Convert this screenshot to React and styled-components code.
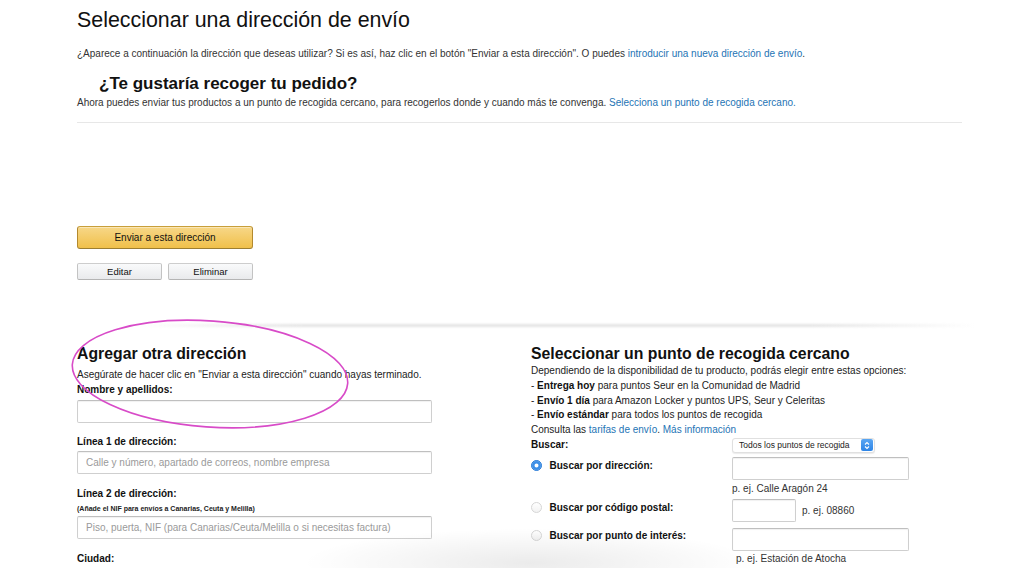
import React from 'react';
import styled, { createGlobalStyle } from 'styled-components';

const Global = createGlobalStyle`
  html, body { margin: 0; padding: 0; background: #fff; }
  body {
    font-family: "Liberation Sans", Arial, Helvetica, sans-serif;
    color: #222;
    -webkit-font-smoothing: antialiased;
  }
  * { box-sizing: border-box; }
`;

const Page = styled.div`
  position: relative;
  width: 1024px;
  height: 568px;
  overflow: hidden;
  padding: 8px 0 0 77px;
`;

const Title = styled.h1`
  margin: 0;
  font-size: 21.4px;
  line-height: 25px;
  font-weight: 400;
  color: #111;
`;

const Text = styled.p`
  margin: ${p => p.$mt || 0}px 0 0;
  font-size: 10px;
  line-height: 14px;
  color: #333;
`;

const Link = styled.a`
  color: #2474b5;
  text-decoration: none;
`;

const PickupTitle = styled.h2`
  margin: 13px 0 0 22px;
  font-size: 17px;
  line-height: 20px;
  font-weight: 700;
  color: #111;
`;

const Divider = styled.hr`
  margin: 12px 0 0;
  width: 885px;
  border: 0;
  border-top: 1px solid #e7e7e7;
`;

const PrimaryButton = styled.button`
  display: block;
  margin-top: 103px;
  width: 176px;
  height: 23px;
  border: 1px solid;
  border-color: #c89f3a #b3892e #9c7e31;
  border-radius: 3px;
  background: linear-gradient(to bottom, #f7d788, #f0c04a);
  box-shadow: 0 1px 0 rgba(255,255,255,.4) inset;
  font-family: inherit;
  font-size: 10px;
  color: #111;
  padding: 0;
`;

const ButtonRow = styled.div`
  display: flex;
  gap: 6px;
  margin-top: 14px;
`;

const SecondaryButton = styled.button`
  width: 85px;
  height: 17px;
  border: 1px solid;
  border-color: #cdcdcd #c3c3c3 #b4b4b4;
  border-radius: 2px;
  background: linear-gradient(to bottom, #f9fafb, #e9eaec);
  font-family: inherit;
  font-size: 9.5px;
  color: #111;
  padding: 0;
`;

const Shade = styled.div`
  margin: 44px 0 0 60px;
  width: 840px;
  height: 3px;
  background: linear-gradient(to right, rgba(230,230,230,0), rgba(225,225,225,.9) 20%, rgba(225,225,225,.9) 80%, rgba(230,230,230,0));
  filter: blur(1px);
`;

const Columns = styled.div`
  display: grid;
  grid-template-columns: 454px 1fr;
  margin-top: 18px;
`;

const Column = styled.div`
  display: flex;
  flex-direction: column;
`;

const SectionTitle = styled.h3`
  margin: 0;
  font-size: 15.8px;
  line-height: 18px;
  font-weight: 700;
  color: #111;
`;

const Note = styled.p`
  margin: ${p => p.$mt || 0}px 0 0;
  font-size: 10px;
  line-height: 13px;
  color: #222;
`;

const Label = styled.label`
  display: block;
  margin-top: ${p => p.$mt || 0}px;
  font-size: 10px;
  line-height: 13px;
  font-weight: 700;
  color: #111;
`;

const Small = styled.div`
  margin-top: 4px;
  font-size: 7px;
  line-height: 9px;
  font-weight: 700;
  color: #222;
`;

const Input = styled.input`
  display: block;
  width: ${p => p.$w || 355}px;
  height: 23px;
  margin-top: ${p => p.$mt || 0}px;
  border: 1px solid #cfcfcf;
  border-top-color: #bfbfbf;
  border-radius: 2px;
  box-shadow: 0 1px 1px rgba(0,0,0,.06) inset;
  padding: 0 8px;
  font-family: inherit;
  font-size: 10px;
  color: #111;
  background: #fff;
  &::placeholder { color: #9a9a9a; }
`;

const List = styled.div`
  margin-top: 1px;
  font-size: 10px;
  line-height: 14.75px;
  color: #222;
  b { color: #111; }
`;

const SearchGrid = styled.div`
  display: grid;
  grid-template-columns: 201px auto;
  align-items: start;
`;

const SearchLabel = styled.div`
  display: flex;
  align-items: center;
  gap: 8px;
  padding-top: ${p => p.$pt || 0}px;
  font-size: 10px;
  line-height: 13px;
  font-weight: 700;
  color: #111;
`;

const Radio = styled.span`
  width: 11px;
  height: 11px;
  border-radius: 50%;
  flex: none;
  margin-left: -0.5px;
  ${p => p.$checked
    ? `background: #3b8fe8; border: 1px solid #2f7fd8; box-shadow: inset 0 0 0 2.5px #3b8fe8, inset 0 0 0 5px #fff;`
    : `background: linear-gradient(#fff, #f2f2f2); border: 1px solid #d6d6d6;`}
`;

const Control = styled.div`
  display: flex;
  flex-direction: ${p => (p.$row ? 'row' : 'column')};
  align-items: ${p => (p.$row ? 'center' : 'flex-start')};
  gap: ${p => (p.$row ? 6 : 0)}px;
  margin-top: ${p => p.$mt || 0}px;
`;

const Hint = styled.div`
  font-size: 10px;
  line-height: 13px;
  color: #333;
  padding-left: ${p => p.$pl || 0}px;
  margin-top: ${p => p.$mt || 0}px;
`;

const Select = styled.div`
  display: flex;
  align-items: center;
  justify-content: space-between;
  width: 143px;
  height: 15px;
  padding: 0 1px 0 6px;
  border: 1px solid #e0e0e0;
  border-radius: 3px;
  background: #fff;
  box-shadow: 0 1px 1px rgba(0,0,0,.08);
  font-size: 8.5px;
  color: #222;
`;

const Stepper = styled.span`
  width: 12px;
  height: 12px;
  border-radius: 2px;
  background: linear-gradient(#5aa6f3, #2d84e6);
  display: flex;
  align-items: center;
  justify-content: center;
`;

const Annotation = styled.svg`
  position: absolute;
  left: 0;
  top: 0;
  pointer-events: none;
`;

const BottomShade = styled.div`
  position: absolute;
  left: 300px;
  bottom: -30px;
  width: 460px;
  height: 70px;
  pointer-events: none;
  background: radial-gradient(ellipse at center, rgba(0,0,0,.08), rgba(0,0,0,0) 70%);
`;

export default function App() {
  return (
    <>
      <Global />
      <Page>
        <Title>Seleccionar una dirección de envío</Title>
        <Text $mt={14}>
          ¿Aparece a continuación la dirección que deseas utilizar? Si es así, haz clic en el botón "Enviar a esta dirección". O puedes{' '}
          <Link href="#">introducir una nueva dirección de envío</Link>.
        </Text>
        <PickupTitle>¿Te gustaría recoger tu pedido?</PickupTitle>
        <Text $mt={2}>
          Ahora puedes enviar tus productos a un punto de recogida cercano, para recogerlos donde y cuando más te convenga.{' '}
          <Link href="#">Selecciona un punto de recogida cercano.</Link>
        </Text>
        <Divider />
        <PrimaryButton>Enviar a esta dirección</PrimaryButton>
        <ButtonRow>
          <SecondaryButton>Editar</SecondaryButton>
          <SecondaryButton>Eliminar</SecondaryButton>
        </ButtonRow>
        <Shade />
        <Columns>
          <Column>
            <SectionTitle>Agregar otra dirección</SectionTitle>
            <Note $mt={5}>Asegúrate de hacer clic en "Enviar a esta dirección" cuando hayas terminado.</Note>
            <Label $mt={2}>Nombre y apellidos:</Label>
            <Input $mt={4} />
            <Label $mt={12}>Línea 1 de dirección:</Label>
            <Input $mt={3} placeholder="Calle y número, apartado de correos, nombre empresa" />
            <Label $mt={13}>Línea 2 de dirección:</Label>
            <Small>(Añade el NIF para envíos a Canarias, Ceuta y Melilla)</Small>
            <Input $mt={3} placeholder="Piso, puerta, NIF (para Canarias/Ceuta/Melilla o si necesitas factura)" />
            <Label $mt={13}>Ciudad:</Label>
            <Input $mt={3} />
          </Column>
          <Column>
            <SectionTitle>Seleccionar un punto de recogida cercano</SectionTitle>
            <List>
              <div>Dependiendo de la disponibilidad de tu producto, podrás elegir entre estas opciones:</div>
              <div>- <b>Entrega hoy</b> para puntos Seur en la Comunidad de Madrid</div>
              <div>- <b>Envío 1 día</b> para Amazon Locker y puntos UPS, Seur y Celeritas</div>
              <div>- <b>Envío estándar</b> para todos los puntos de recogida</div>
              <div>Consulta las <Link href="#">tarifas de envío</Link>. <Link href="#">Más información</Link></div>
            </List>
            <SearchGrid>
              <SearchLabel>Buscar:</SearchLabel>
              <Control>
                <Select>
                  <span>Todos los puntos de recogida</span>
                  <Stepper>
                    <svg width="6" height="9" viewBox="0 0 6 9">
                      <path d="M1 3.5 L3 1.5 L5 3.5 M1 5.5 L3 7.5 L5 5.5" fill="none" stroke="#fff" strokeWidth="1.1" />
                    </svg>
                  </Stepper>
                </Select>
              </Control>

              <SearchLabel $pt={6}>
                <Radio $checked /> <span>Buscar por dirección:</span>
              </SearchLabel>
              <Control $mt={4}>
                <Input $w={177} />
                <Hint $mt={2}>p. ej. Calle Aragón 24</Hint>
              </Control>

              <SearchLabel $pt={6}>
                <Radio /> <span>Buscar por código postal:</span>
              </SearchLabel>
              <Control $row $mt={4}>
                <Input $w={64} />
                <Hint>p. ej. 08860</Hint>
              </Control>

              <SearchLabel $pt={7}>
                <Radio /> <span>Buscar por punto de interés:</span>
              </SearchLabel>
              <Control $mt={6}>
                <Input $w={177} />
                <Hint $mt={1} $pl={4}>p. ej. Estación de Atocha</Hint>
              </Control>
            </SearchGrid>
          </Column>
        </Columns>
        <BottomShade />
        <Annotation width="1024" height="568" viewBox="0 0 1024 568">
          <ellipse cx="210" cy="374" rx="138" ry="53" transform="rotate(4 210 374)" fill="none" stroke="#d84bc8" strokeWidth="1.6" />
        </Annotation>
      </Page>
    </>
  );
}
